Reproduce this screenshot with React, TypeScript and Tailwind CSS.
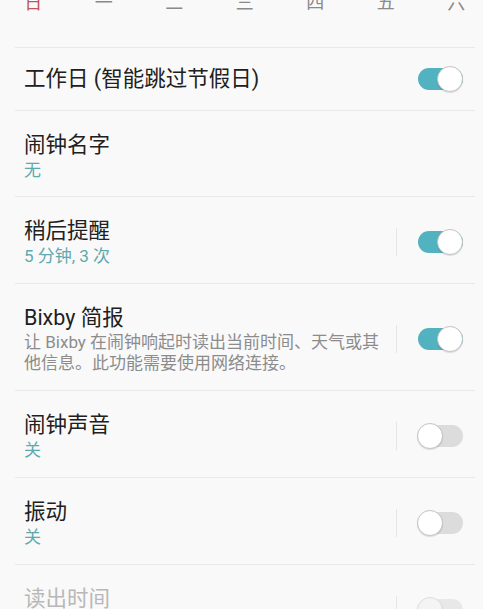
import React from "react";

const FONT = { fontFamily: '"Roboto", "Noto Sans CJK SC", "Noto Sans", sans-serif' };

function Toggle({ on, disabled }: { on: boolean; disabled?: boolean }) {
  return (
    <div className="relative w-[46px] h-[26px] shrink-0">
      <div
        className={
          "absolute left-[1px] right-0 top-[2px] h-[22px] rounded-full " +
          (on ? "bg-[#52b2c0]" : disabled ? "bg-[#e8e8e8]" : "bg-[#dcdcdc]")
        }
      />
      <div
        className={
          "absolute top-0 w-[26px] h-[26px] rounded-full border shadow-[0_1px_1px_rgba(0,0,0,0.12)] " +
          (disabled ? "bg-[#f4f4f4] border-[#dedede] " : "bg-white border-[#c4c4c4] ") +
          (on ? "right-0" : "left-0")
        }
      />
    </div>
  );
}

function Row({
  title,
  sub,
  subTone = "teal",
  on,
  divider = true,
  disabled,
  last,
}: {
  title: string;
  sub?: React.ReactNode;
  subTone?: "teal" | "gray";
  on: boolean;
  divider?: boolean;
  disabled?: boolean;
  last?: boolean;
}) {
  return (
    <div
      className={
        "ml-[15px] mr-[8px] flex items-center pl-[9px] pr-[12px] pt-[20px] pb-[16px]" +
        (last ? "" : " border-b border-[#e9e9e9]")
      }
    >
      <div className="flex-1 min-w-0 pr-[6px]">
        <div className={"text-[21.5px] leading-[28px] " + (disabled ? "text-[#b8b8b8]" : "text-[#202020]")}>{title}</div>
        {sub && (
          <div
            className={
              subTone === "teal"
                ? "text-[17px] leading-[22px] text-[#5ea9ae]"
                : "text-[17px] leading-[21px] text-[#8c8c8c]"
            }
          >
            {sub}
          </div>
        )}
      </div>
      {divider && <div className="w-px h-[28px] bg-[#e6e6e6] mr-[20px]" />}
      <Toggle on={on} disabled={disabled} />
    </div>
  );
}

export default function App() {
  const days = ["日", "一", "二", "三", "四", "五", "六"];
  return (
    <div className="w-full h-[609px] bg-[#f9f9f9] overflow-hidden" style={FONT}>
      <div className="h-[48px] ml-[15px] mr-[8px] border-b border-[#e9e9e9] overflow-hidden">
        <div className="flex -mt-[9px] -ml-[17px]">
          {days.map((d, i) => (
            <div
              key={d}
              className={
                "w-[70.5px] shrink-0 text-center text-[18px] leading-[24px] " +
                (i === 0 ? "text-[#c0575a]" : "text-[#8a8a8a]")
              }
            >
              {d}
            </div>
          ))}
        </div>
      </div>
      <div className="ml-[15px] mr-[8px] flex items-center pl-[9px] pr-[12px] h-[63px] border-b border-[#e9e9e9]">
        <div className="flex-1 text-[21.5px] leading-[28px] text-[#202020]">工作日 (智能跳过节假日)</div>
        <Toggle on />
      </div>
      <div className="ml-[15px] mr-[8px] flex flex-col justify-center pl-[9px] pt-[4px] h-[86px] border-b border-[#e9e9e9]">
        <div className="text-[21.5px] leading-[28px] text-[#202020]">闹钟名字</div>
        <div className="text-[17px] leading-[22px] text-[#5ea9ae]">无</div>
      </div>
      <Row title="稍后提醒" sub="5 分钟, 3 次" on />
      <Row
        title="Bixby 简报"
        sub={
          <>
            让 Bixby 在闹钟响起时读出当前时间、天气或其
            <br />
            他信息。此功能需要使用网络连接。
          </>
        }
        subTone="gray"
        on
      />
      <Row title="闹钟声音" sub="关" on={false} />
      <Row title="振动" sub="关" on={false} />
      <Row title="读出时间" sub="关" on={false} disabled last />
    </div>
  );
}
